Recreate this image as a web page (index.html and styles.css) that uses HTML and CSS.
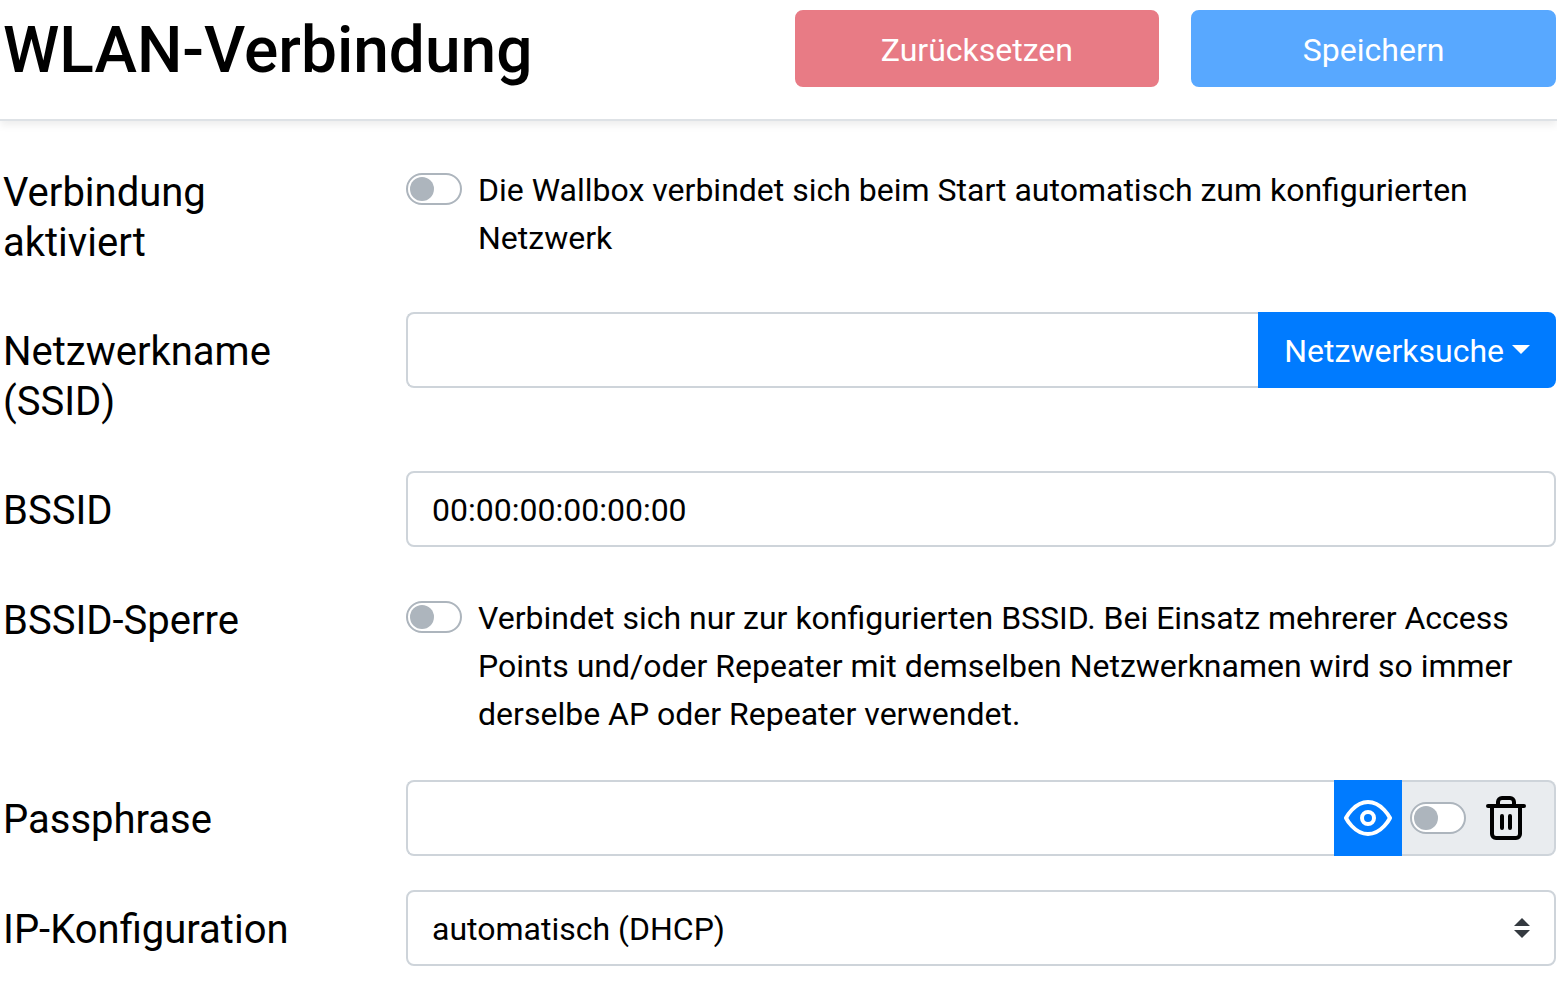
FILE: index.html
```html
<!DOCTYPE html>
<html lang="de">
<head>
<meta charset="utf-8">
<meta name="viewport" content="width=device-width, initial-scale=1">
<title>WLAN-Verbindung</title>
<link rel="stylesheet" href="styles.css">
</head>
<body>
<form>
  <header class="page-header">
    <h1 class="page-title">WLAN-Verbindung</h1>
    <div class="actions">
      <button type="reset" class="btn btn-danger" disabled>Zurücksetzen</button>
      <button type="submit" class="btn btn-primary" disabled>Speichern</button>
    </div>
  </header>
  <main class="settings">
    <div class="row">
      <label class="row-label" for="enable">Verbindung aktiviert</label>
      <div class="check">
        <input class="switch" type="checkbox" id="enable">
        <label for="enable">Die Wallbox verbindet sich beim Start automatisch zum konfigurierten Netzwerk</label>
      </div>
    </div>
    <div class="row">
      <label class="row-label" for="ssid">Netzwerkname (SSID)</label>
      <div class="group">
        <input class="control" type="text" id="ssid">
        <button type="button" class="btn btn-primary btn-search">Netzwerksuche<span class="caret"></span></button>
      </div>
    </div>
    <div class="row">
      <label class="row-label" for="bssid">BSSID</label>
      <div class="group">
        <input class="control" type="text" id="bssid" value="00:00:00:00:00:00">
      </div>
    </div>
    <div class="row">
      <label class="row-label" for="lock">BSSID-Sperre</label>
      <div class="check">
        <input class="switch" type="checkbox" id="lock">
        <label for="lock">Verbindet sich nur zur konfigurierten BSSID. Bei Einsatz mehrerer Access Points und/oder Repeater mit demselben Netzwerknamen wird so immer derselbe AP oder Repeater verwendet.</label>
      </div>
    </div>
    <div class="row">
      <label class="row-label" for="passphrase">Passphrase</label>
      <div class="group">
        <input class="control" type="password" id="passphrase">
        <button type="button" class="btn btn-primary btn-eye" aria-label="Passphrase anzeigen">
          <svg class="icon" viewBox="0 0 24 24"><path d="M1 12s4-8 11-8 11 8 11 8-4 8-11 8-11-8-11-8z"/><circle cx="12" cy="12" r="3"/></svg>
        </button>
        <div class="addon">
          <input class="switch" type="checkbox" id="clear">
          <label class="icon-label" for="clear" aria-label="Passphrase löschen">
            <svg class="icon" viewBox="0 0 24 24"><path d="M3 6h18M19 6v14a2 2 0 0 1-2 2H7a2 2 0 0 1-2-2V6m3 0V4a2 2 0 0 1 2-2h4a2 2 0 0 1 2 2v2M10 11v6M14 11v6"/></svg>
          </label>
        </div>
      </div>
    </div>
    <div class="row">
      <label class="row-label" for="ip">IP-Konfiguration</label>
      <div class="group select-wrap">
        <select class="control" id="ip">
          <option>automatisch (DHCP)</option>
        </select>
        <svg class="select-arrow" viewBox="0 0 4 5"><path d="M2 0L0 2h4zm0 5L0 3h4z"/></svg>
      </div>
    </div>
  </main>
</form>
</body>
</html>
```
FILE: styles.css
```css
*, *::before {
  box-sizing: border-box;
}

body {
  margin: 0;
  background: #fff;
  color: #000;
  font: 400 32px/48px Roboto, "Liberation Sans", sans-serif;
}

.page-header {
  display: flex;
  align-items: flex-start;
  padding: 10px 1px 32px 2px;
  border-bottom: 2px solid #dee2e6;
  box-shadow: 0 4px 8px rgba(0, 0, 0, 0.075);
}

.page-title {
  flex: 1;
  margin: 0;
  padding: 4px 0 0 1px;
  font-size: 64px;
  font-weight: 500;
  line-height: 73px;
}

.actions {
  display: grid;
  grid-template-columns: 1fr 1fr;
  gap: 32px;
  width: 49%;
}

.btn {
  padding: 13px 24px 11px;
  border: 2px solid transparent;
  border-radius: 8px;
  color: #fff;
  font: inherit;
  text-align: center;
}

.actions .btn {
  padding: 14px 24px 11px;
}

.btn:disabled {
  opacity: 0.65;
}

.btn-danger {
  background: #dc3545;
  border-color: #dc3545;
}

.btn-primary {
  background: #007bff;
  border-color: #007bff;
}

.settings {
  display: flex;
  flex-direction: column;
  gap: 32px;
  padding: 32px 1px 32px 2px;
}

.row {
  display: grid;
  grid-template-columns: 26% 1fr;
  align-items: start;
  min-height: 78px;
}

.row-label {
  padding: 15px 64px 12px 1px;
  font-size: 40px;
  line-height: 50px;
}

.check {
  display: flex;
  gap: 16px;
  padding: 13px 0 10px;
}

.switch {
  appearance: none;
  flex: none;
  width: 56px;
  height: 32px;
  margin: 7px 0 0;
  padding: 2px;
  border: 2px solid #adb5bd;
  border-radius: 16px;
  background: #fff;
}

.switch::before {
  content: "";
  display: block;
  width: 24px;
  height: 24px;
  border-radius: 50%;
  background: #adb5bd;
}

.switch:checked::before {
  margin-left: auto;
}

.group {
  display: flex;
}

.control {
  appearance: none;
  flex: 1;
  min-width: 0;
  height: 76px;
  margin: 0;
  padding: 13px 24px 11px;
  border: 2px solid #ced4da;
  border-radius: 8px;
  background: #fff;
  color: #000;
  font: inherit;
}

.control:not(:last-child) {
  border-right: 0;
  border-radius: 8px 0 0 8px;
}

.btn-search {
  display: flex;
  align-items: center;
  gap: 8px;
  border-radius: 0 8px 8px 0;
}

.caret {
  margin-bottom: 4px;
  border: 9px solid transparent;
  border-top-color: #fff;
  border-bottom: 0;
}

.btn-eye {
  padding: 12px 8px;
  border-radius: 0;
}

.icon {
  display: block;
  width: 48px;
  height: 48px;
  fill: none;
  stroke: currentColor;
  stroke-width: 2;
  stroke-linecap: round;
  stroke-linejoin: round;
}

.addon {
  display: flex;
  align-items: center;
  gap: 16px;
  padding: 0 24px 0 8px;
  border: 2px solid #ced4da;
  border-left: 0;
  border-radius: 0 8px 8px 0;
  background: #e9ecef;
}

.addon .switch {
  margin: 0;
}

.select-wrap {
  display: grid;
  align-items: center;
}

.select-wrap .control,
.select-arrow {
  grid-area: 1 / 1;
}

.select-wrap .control {
  border-right: 2px solid #ced4da;
  border-radius: 8px;
}

.select-arrow {
  justify-self: end;
  width: 16px;
  height: 20px;
  margin-right: 26px;
  fill: #343a40;
  pointer-events: none;
}
```
